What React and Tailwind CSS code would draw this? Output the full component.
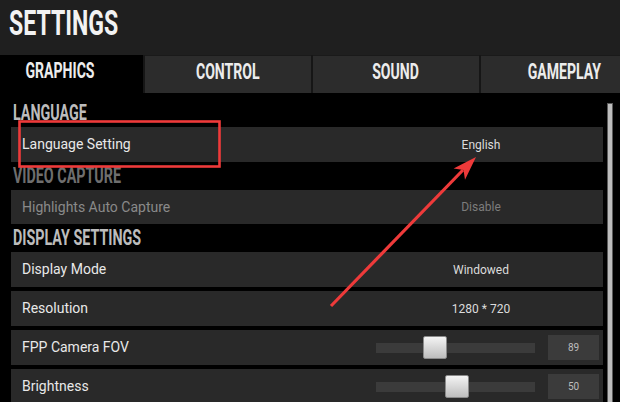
const tabs = ['GRAPHICS', 'CONTROL', 'SOUND', 'GAMEPLAY'];

function SectionLabel({ children, dim }) {
  return (
    <div className="h-[28px] pl-[2px] leading-[28px]">
      <span
        className={`inline-block origin-left scale-x-[0.65] text-[22px] font-bold ${
          dim ? 'text-[#6e6e6e]' : 'text-[#bcbcbc]'
        }`}
      >
        {children}
      </span>
    </div>
  );
}

function Row({ label, value, dim, h = 'h-[35px]' }) {
  return (
    <div className={`flex ${h} items-center bg-[#292929]`}>
      <span
        className={`flex-1 pl-[11px] text-[14px] ${
          dim ? 'text-[#8a8a8a]' : 'text-[#e8e8e8]'
        }`}
      >
        {label}
      </span>
      <span
        className={`w-[244px] text-center text-[12px] ${
          dim ? 'text-[#7c7c7c]' : 'text-[#dcdcdc]'
        }`}
      >
        {value}
      </span>
    </div>
  );
}

function SliderRow({ label, value, pos }) {
  return (
    <div className="flex h-[35px] items-center bg-[#292929]">
      <span className="flex-1 pl-[11px] text-[14px] text-[#e8e8e8]">{label}</span>
      <div className="relative h-[10px] w-[159px] bg-[#3b3b3b]">
        <div
          className="absolute top-[-7px] h-[23px] w-[24px] rounded-[2px] border border-[#8a8a8a] bg-linear-to-b from-[#f4f4f4] to-[#bdbdbd]"
          style={{ left: `${pos * 135}px` }}
        />
      </div>
      <div className="ml-[13px] mr-[4px] flex h-[25px] w-[51px] items-center justify-center bg-[#3b3b3b] text-[10px] text-[#bdbdbd]">
        {value}
      </div>
    </div>
  );
}

export default function App() {
  return (
    <div className="relative h-[402px] w-[620px] overflow-hidden bg-black font-[Roboto,sans-serif]">
      <header className="h-[55px] bg-[#1f1f1f] pl-[9px] pt-[6px]">
        <span className="inline-block origin-left scale-x-[0.66] text-[35px] font-bold leading-[35px] text-[#f2f2f2]">
          SETTINGS
        </span>
      </header>

      <nav className="flex h-[38px] gap-[2px] bg-[#161616] ml-[-23px]">
        {tabs.map((t, i) => (
          <div
            key={t}
            className={`flex h-full w-[166px] shrink-0 justify-center ${
              i === 0 ? 'bg-black' : 'border-t border-[#1a1a1a] bg-[#2c2c2c]'
            }`}
          >
            <span className="inline-block origin-center scale-x-[0.64] text-[22px] font-bold leading-[32px] text-[#ececec]">
              {t}
            </span>
          </div>
        ))}
      </nav>

      <div className="flex pl-[11px]">
        <div className="w-[592px] pt-[6px]">
          <SectionLabel>LANGUAGE</SectionLabel>
          <Row label="Language Setting" value="English" />
          <SectionLabel dim>VIDEO CAPTURE</SectionLabel>
          <Row label="Highlights Auto Capture" value="Disable" dim h="h-[34px]" />
          <SectionLabel>DISPLAY SETTINGS</SectionLabel>
          <div className="flex flex-col gap-[4px]">
            <Row label="Display Mode" value="Windowed" />
            <Row label="Resolution" value="1280 * 720" />
            <SliderRow label="FPP Camera FOV" value="89" pos={0.35} />
            <SliderRow label="Brightness" value="50" pos={0.51} />
          </div>
        </div>
        <div className="ml-[4px] mt-[10px] h-[320px] w-[6px] border border-[#5a5a5a] bg-[#bdbdbd]" />
      </div>

      {/* annotation */}
      <svg className="pointer-events-none absolute inset-0" width="620" height="402">
        <rect x="19.5" y="121.5" width="200" height="45" fill="none" stroke="#ee3a3a" strokeWidth="2.6" />
        <line x1="331" y1="306" x2="463" y2="170" stroke="#ee3a3a" strokeWidth="3.2" />
        <polygon points="476,157 453.6,168.6 463.5,169.9 465,179.8" fill="#ee3a3a" />
      </svg>
    </div>
  );
}
